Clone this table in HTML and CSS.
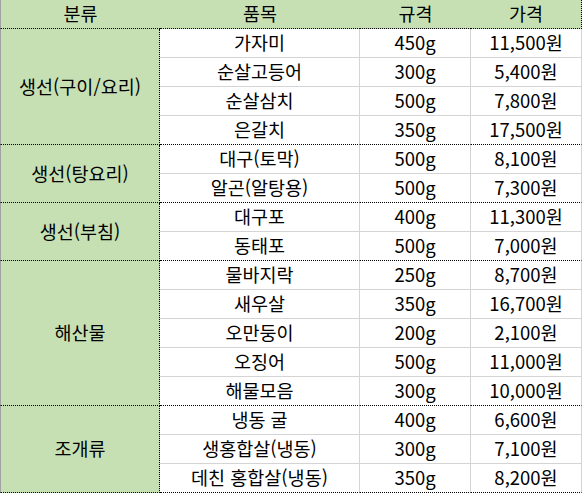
FILE: index.html
```html
<!DOCTYPE html>
<html lang="ko">
<head>
<meta charset="utf-8">
<title>수산물 가격표</title>
<link rel="stylesheet" href="styles.css">
</head>
<body>
<div class="sheet">
  <div class="cell head cat">분류</div>
  <div class="cell head">품목</div>
  <div class="cell head">규격</div>
  <div class="cell head last">가격</div>

  <div class="cell group span4">생선(구이/요리)</div>
  <div class="cell">가자미</div><div class="cell">450g</div><div class="cell last">11,500원</div>
  <div class="cell">순살고등어</div><div class="cell">300g</div><div class="cell last">5,400원</div>
  <div class="cell">순살삼치</div><div class="cell">500g</div><div class="cell last">7,800원</div>
  <div class="cell end">은갈치</div><div class="cell end">350g</div><div class="cell end last">17,500원</div>

  <div class="cell group span2">생선(탕요리)</div>
  <div class="cell">대구(토막)</div><div class="cell">500g</div><div class="cell last">8,100원</div>
  <div class="cell end">알곤(알탕용)</div><div class="cell end">500g</div><div class="cell end last">7,300원</div>

  <div class="cell group span2">생선(부침)</div>
  <div class="cell">대구포</div><div class="cell">400g</div><div class="cell last">11,300원</div>
  <div class="cell end">동태포</div><div class="cell end">500g</div><div class="cell end last">7,000원</div>

  <div class="cell group span5">해산물</div>
  <div class="cell">물바지락</div><div class="cell">250g</div><div class="cell last">8,700원</div>
  <div class="cell">새우살</div><div class="cell">350g</div><div class="cell last">16,700원</div>
  <div class="cell">오만둥이</div><div class="cell">200g</div><div class="cell last">2,100원</div>
  <div class="cell">오징어</div><div class="cell">500g</div><div class="cell last">11,000원</div>
  <div class="cell end">해물모음</div><div class="cell end">300g</div><div class="cell end last">10,000원</div>

  <div class="cell group span3">조개류</div>
  <div class="cell">냉동 굴</div><div class="cell">400g</div><div class="cell last">6,600원</div>
  <div class="cell">생홍합살(냉동)</div><div class="cell">300g</div><div class="cell last">7,100원</div>
  <div class="cell end">데친 홍합살(냉동)</div><div class="cell end">350g</div><div class="cell end last">8,200원</div>
</div>
</body>
</html>
```

FILE: styles.css
```css
html, body {
  margin: 0;
  padding: 0;
  background: #ffffff;
}

.sheet {
  display: grid;
  grid-template-columns: 160px 200px 111px 111px;
  grid-auto-rows: 29px;
  font-family: "Noto Sans CJK KR", "Noto Sans", sans-serif;
  font-size: 18.5px;
  color: #000000;
}

.cell {
  box-sizing: border-box;
  display: flex;
  align-items: center;
  justify-content: center;
  white-space: nowrap;
  line-height: 1;
  border-bottom: 1px solid #d4d4d4;
  border-right: 1px solid #d4d4d4;
  padding-bottom: 1px;
}

.cell.last {
  border-right: 1px solid #d4d4d4;
}

.head {
  background: #c6e0b4;
  border-bottom: 1px dotted #000000;
  border-right: none;
}

.head.cat {
  border-left: 1px solid #a2a2a2;
}

.head.last {
  border-right: 1px dotted #000000;
}

.group {
  background: #c6e0b4;
  border-left: 1px solid #a2a2a2;
  border-right: 1px dotted #000000;
  border-bottom: 1px dotted #000000;
}

.cell.end {
  border-bottom: 1px dotted #000000;
}

.span2 { grid-row: span 2; }
.span3 { grid-row: span 3; }
.span4 { grid-row: span 4; }
.span5 { grid-row: span 5; }
```
